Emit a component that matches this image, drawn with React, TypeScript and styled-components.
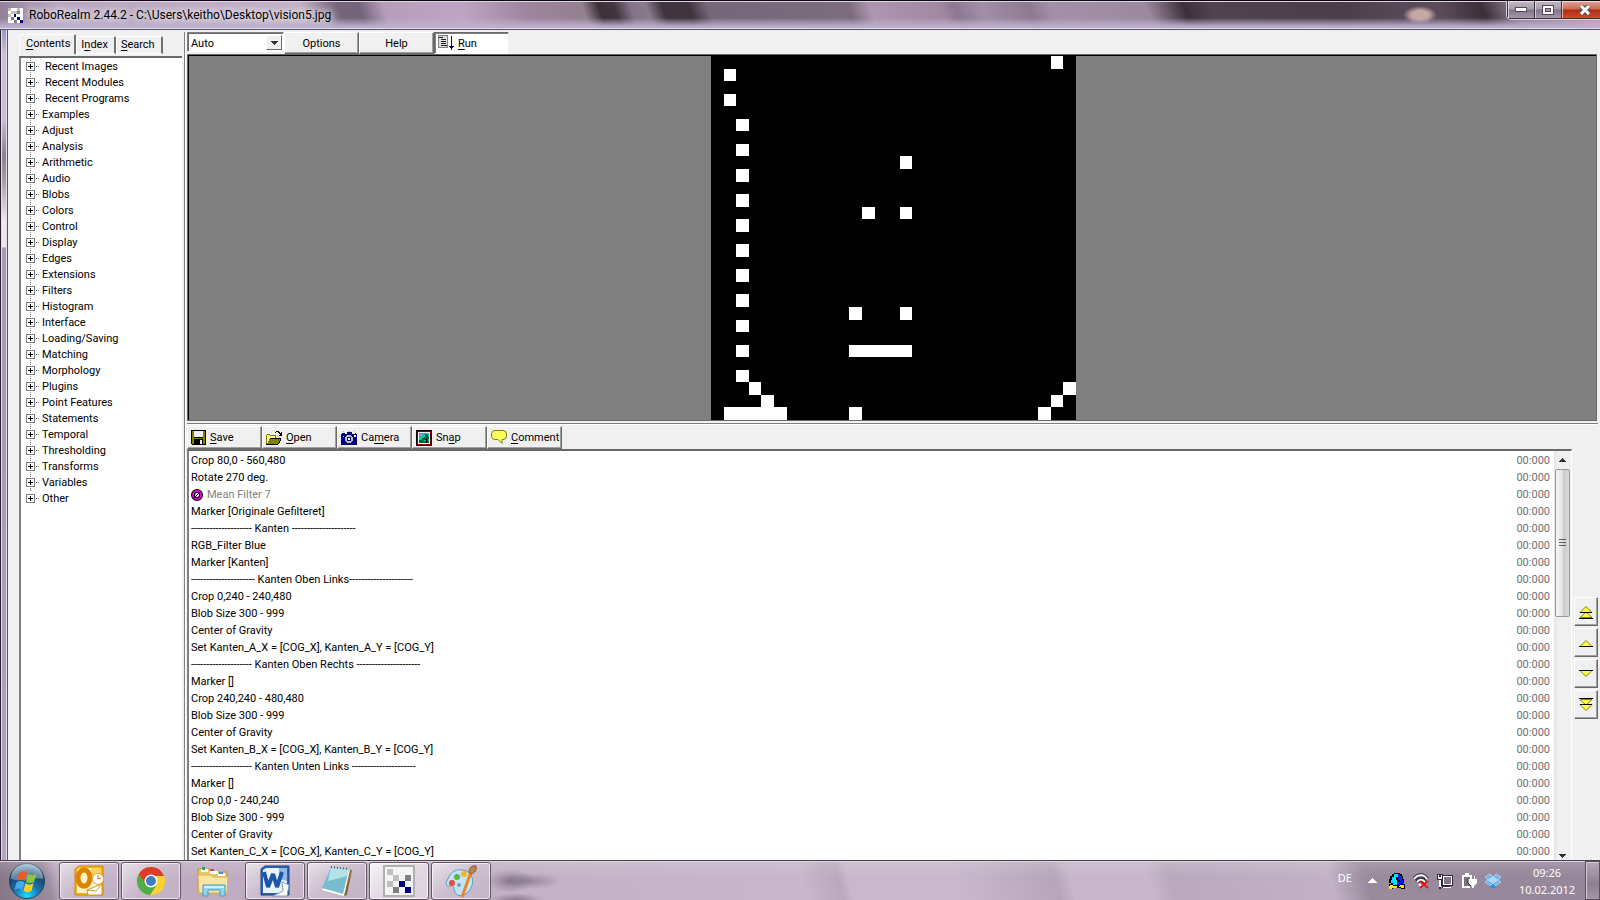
import type { ReactNode } from 'react';
import styled, { createGlobalStyle } from 'styled-components';

const GlobalStyle = createGlobalStyle`
  * {
    box-sizing: border-box;
  }
  body {
    margin: 0;
    overflow: hidden;
    font-family: Roboto, "Liberation Sans", sans-serif;
    font-size: 11px;
    color: #000000;
  }
  button, select {
    font: inherit;
    color: inherit;
    border-radius: 0;
    margin: 0;
    padding: 0;
  }
  u {
    text-underline-offset: 2px;
  }
  svg {
    display: block;
    flex: none;
  }
`;

const Desktop = styled.div`
  display: flex;
  flex-direction: column;
  height: 100vh;
`;

/* ---------- window frame ---------- */

const TitleBar = styled.header`
  display: flex;
  flex: none;
  height: 30px;
  padding-left: 8px;
  border-top: 1px solid #0c0610;
  border-bottom: 1px solid #5a5060;
  box-shadow: inset 0 1px #e2d6e6, inset 0 -1px #e4dcea;
  background:
    linear-gradient(to bottom, rgba(186, 174, 204, 0) 60%, rgba(188, 176, 206, 0.95) 90%),
    radial-gradient(ellipse 17px 9px at 1420px 14px, #c4a8a4 50%, rgba(196, 168, 164, 0)),
    linear-gradient(70deg, #8d7c94 0, #b8a6bf 60px, #c3b2c8 290px, #76647a 325px, #74647a 345px,
      #b69ebb 368px, #bfa5c3 440px, #9d869f 500px, #93808f 555px, #3d3039 570px, #43363f 585px,
      #84728a 600px, #8a7a8d 615px, #40343f 630px, #3f333c 655px, #75667a 672px, #7c6c7e 805px,
      #ac96b0 825px, #a08aa2 890px, #8d7891 905px, #a28ea6 930px, #8d7a90 975px, #a390a8 995px,
      #9c889e 1085px, #3d303c 1120px, #50434f 1145px, #4b3e49 1270px, #574858 1320px,
      #5c4c5a 1360px, #3c2f38 1400px, #8c7a90 1430px, #b8a4b8 1510px);
`;

const Caption = styled.h1`
  display: flex;
  align-items: center;
  flex: 1;
  gap: 6px;
  margin: 0;
  font: 12px/18px Roboto, sans-serif;
  text-shadow: 0 0 6px #ffffff, 0 0 10px #ffffff;
`;

const CaptionButtons = styled.div`
  display: flex;
  height: 19px;
  border: 1px solid #ded4e0;
  border-width: 0 0 1px 1px;
  border-radius: 0 0 0 5px;
  overflow: hidden;
`;

const CaptionButton = styled.button<{ $close?: boolean }>`
  display: flex;
  align-items: center;
  justify-content: center;
  width: ${p => p.$close ? 39 : 27}px;
  padding-left: ${p => p.$close ? 8 : 0}px;
  border: 1px solid #3d303d;
  border-width: 0 0 1px 1px;
  box-shadow: inset 1px 1px rgba(255, 255, 255, 0.6);
  background: ${p => p.$close
    ? 'linear-gradient(#e0a598, #cd6a56 48%, #ae2b14 52%, #cf4a2c)'
    : 'linear-gradient(#c3b8c6, #a89bad 48%, #82748a 52%, #a596ab)'};
`;

const Frame = styled.main`
  display: flex;
  flex: 1;
  min-height: 0;
  background: #f0f0f0;
`;

const FrameEdge = styled.div`
  flex: none;
  width: 8px;
  border-left: 1px solid #2a2230;
  border-right: 1px solid #5a5060;
  box-shadow: inset 1px 0 #e6dcea, inset -1px 0 #e6dcea;
  background: linear-gradient(#8f9dbe 0, #d2bdd6 24px, #cdbcd3 90px, #8d8092 125px, #a79ba9 150px,
    #efe6ee 190px, #efe6ee 217px, #a897b8 218px, #a897b8 380px, #b5a4bb);
`;

/* ---------- module tree ---------- */

const Sidebar = styled.nav`
  display: flex;
  flex-direction: column;
  flex: none;
  width: 176px;
  padding: 4px 2px 0 11px;
`;

const TabList = styled.div`
  display: flex;
  align-items: flex-end;
  height: 20px;
  margin-bottom: 2px;
`;

const Tab = styled.button<{ $active?: boolean }>`
  height: ${p => p.$active ? 20 : 18}px;
  padding: ${p => p.$active ? '0 4px 2px 6px' : '0 6px 0 4px'};
  border: 1px solid #ffffff;
  border-right: 2px solid #707070;
  border-bottom-width: ${p => p.$active ? 0 : 1}px;
  border-radius: 2px 2px 0 0;
  background: #f0f0f0;
  line-height: 16px;
`;

const Tree = styled.ul`
  flex: 1;
  min-height: 0;
  margin: 0;
  padding: 0 0 0 5px;
  border-top: 2px solid #696969;
  border-left: 2px solid #808080;
  background: #ffffff;
  list-style: none;
  overflow: hidden;
`;

const TreeItem = styled.li<{ $indent?: boolean }>`
  display: flex;
  align-items: center;
  height: 16px;
  gap: ${p => p.$indent ? 6 : 3}px;
  background: linear-gradient(#808080 50%, transparent 50%) 4px 0 / 1px 2px repeat-y;
  white-space: nowrap;
  &:last-child {
    background-size: 1px 2px;
    background-repeat: no-repeat;
  }
`;

const Expander = styled.button`
  display: flex;
  border: 0;
  background: none;
`;

/* ---------- work area ---------- */

const Work = styled.section`
  display: flex;
  flex-direction: column;
  flex: 1;
  min-width: 0;
  margin-top: 2px;
  padding-left: 2px;
  border-left: 1px solid #808080;
  box-shadow: inset 1px 0 #ffffff;
`;

const ViewBar = styled.div`
  display: flex;
  height: 22px;
`;

const ComboBox = styled.span`
  display: flex;
  position: relative;
  width: 97px;
  height: 20px;
  border: 1px solid;
  border-color: #808080 #ffffff #ffffff #808080;
  box-shadow: inset 1px 1px #696969;
  background: #ffffff;
`;

const ZoomSelect = styled.select`
  appearance: none;
  width: 100%;
  padding: 2px 0 0 3px;
  border: 0;
  background: transparent;
`;

const ComboArrow = styled.span`
  display: flex;
  align-items: center;
  justify-content: center;
  position: absolute;
  top: 2px;
  right: 1px;
  bottom: 1px;
  width: 16px;
  border: 1px solid;
  border-color: #ffffff #696969 #696969 #ffffff;
  background: #f0f0f0;
  pointer-events: none;
`;

const PushButton = styled.button<{ $sunken?: boolean; $icon?: boolean }>`
  display: flex;
  align-items: center;
  justify-content: ${p => p.$icon ? 'flex-start' : 'center'};
  gap: 4px;
  width: 75px;
  padding: ${p => p.$icon ? '0 0 0 3px' : 0};
  border: 1px solid;
  border-color: ${p => p.$sunken ? '#696969 #f0f0f0 #ffffff #696969' : '#ffffff #696969 #696969 #ffffff'};
  box-shadow: ${p => p.$sunken ? 'inset 1px 1px #808080' : 'inset -1px -1px #a0a0a0'};
  background: ${p => p.$sunken ? '#ffffff' : '#f0f0f0'};
`;

const Viewport = styled.div`
  display: flex;
  flex: none;
  justify-content: center;
  margin: 0 3px 2px 0;
  border: 1px solid #696969;
  background: #808080;
  box-shadow: inset 1px 1px #000000;
  padding: 1px 0 0 2px;
`;

const PipelineBar = styled.div`
  display: flex;
  flex: none;
  height: 26px;
  margin-right: 2px;
  padding-top: 2px;
  border-top: 1px solid #808080;
  box-shadow: inset 0 1px #ffffff;
`;

const PipelineArea = styled.div`
  display: flex;
  flex: 1;
  min-height: 0;
`;

const Pipeline = styled.div`
  display: flex;
  flex: 1;
  border-top: 2px solid #696969;
  border-left: 2px solid #808080;
  border-right: 1px solid #ffffff;
  background: #ffffff;
  overflow: hidden;
`;

const Steps = styled.ol`
  flex: 1;
  margin: 0;
  padding: 1px 4px 0 2px;
  list-style: none;
`;

const Step = styled.li<{ $off?: boolean }>`
  display: flex;
  align-items: center;
  height: 17px;
  color: ${p => p.$off ? '#808080' : '#000000'};
  white-space: pre;
  svg {
    margin-right: 4px;
  }
`;

const Elapsed = styled.time`
  margin-left: auto;
  color: #707070;
`;

const ScrollBar = styled.div`
  display: flex;
  flex-direction: column;
  width: 17px;
  background: linear-gradient(to right, #e4e4e4, #f1f1f1 4px, #efefef);
`;

const ScrollButton = styled.button`
  display: flex;
  align-items: center;
  justify-content: center;
  height: 18px;
  border: 0;
  background: transparent;
  &:last-child {
    height: 8px;
  }
`;

const Thumb = styled.div`
  display: flex;
  align-items: center;
  justify-content: center;
  height: 148px;
  margin: 0 1px;
  border: 1px solid #979797;
  border-radius: 2px;
  background: linear-gradient(to right, #f6f6f6, #e6e6e8 45%, #c9c9cf 60%, #dadade);
`;

const Track = styled.div`
  flex: 1;
`;

const MoveButtons = styled.div`
  display: flex;
  flex-direction: column;
  gap: 2px;
  width: 28px;
  padding: 148px 2px 0 2px;
`;

const MoveButton = styled.button`
  display: flex;
  align-items: center;
  justify-content: center;
  height: 29px;
  border: 1px solid;
  border-color: #ffffff #696969 #696969 #ffffff;
  box-shadow: inset -1px -1px #a0a0a0;
  background: #f0f0f0;
`;

/* ---------- taskbar ---------- */

const TaskBar = styled.footer`
  display: flex;
  flex: none;
  height: 40px;
  border-top: 1px solid #4c4350;
  box-shadow: inset 0 1px #dfd0e2;
  background:
    linear-gradient(rgba(255, 255, 255, 0.15), rgba(255, 255, 255, 0) 40%),
    radial-gradient(ellipse 24px 12px at 510px 20px, rgba(92, 76, 96, 0.5), rgba(92, 76, 96, 0)),
    radial-gradient(ellipse 32px 8px at 530px 20px, rgba(92, 76, 96, 0.4), rgba(92, 76, 96, 0)),
    radial-gradient(ellipse 28px 8px at 516px 40px, rgba(92, 76, 96, 0.6), rgba(92, 76, 96, 0)),
    linear-gradient(75deg, #857688 0, #9b8b9e 50px, #bda9bf 62px, #c4b2c7 560px, #c8b6cb 780px,
      #bfadc2 800px, #bba8be 815px, #c9b7cc 825px, #c9b7cc 930px, #b7a6bb 1025px, #c8b6cb 1040px,
      #c8b6cb 1115px, #baa9be 1135px, #c3b1c6 1290px, #998a9c 1325px, #94859a 1600px);
`;

const StartButton = styled.button`
  display: flex;
  align-items: center;
  width: 59px;
  padding-left: 8px;
  border: 0;
  background: none;
`;

const TaskButtons = styled.div`
  display: flex;
  flex: 1;
  gap: 2px;
  padding-top: 1px;
`;

const TaskButton = styled.button<{ $look: 'open' | 'active' | 'idle' }>`
  display: flex;
  align-items: center;
  justify-content: center;
  width: 60px;
  border: 1px solid ${p => p.$look === 'idle' ? 'transparent' : '#605466'};
  border-radius: 3px;
  box-shadow: ${p => p.$look === 'idle' ? 'none' : 'inset 0 0 0 1px rgba(255, 255, 255, 0.65)'};
  background: ${p => ({
    idle: 'none',
    open: 'linear-gradient(135deg, rgba(255,255,255,0.6), rgba(255,255,255,0.15) 50%, rgba(255,255,255,0.05))',
    active: 'linear-gradient(135deg, rgba(255,255,255,0.85), rgba(255,255,255,0.5) 50%, rgba(255,255,255,0.45))',
  })[p.$look]};
`;

const Tray = styled.div`
  display: flex;
  align-items: center;
  gap: 8px;
  color: #ffffff;
  font: 11px/17px "Noto Sans", sans-serif;
`;

const Language = styled.span`
  margin: 0 8px 6px 0;
`;

const TrayArrow = styled.span`
  margin-right: 4px;
`;

const Clock = styled.time`
  display: flex;
  flex-direction: column;
  align-items: center;
  width: 76px;
`;

const ShowDesktop = styled.button`
  width: 15px;
  border: 1px solid #5b4f60;
  box-shadow: inset 1px 1px #d5c9d8;
  background: linear-gradient(#b5a8b9, #8d7f92 60%, #a496a8);
`;

/* ---------- drawings ---------- */

const Crisp = ({ w, h, children }: { w: number; h: number; children: ReactNode }) =>
  <svg width={w} height={h} viewBox={`0 0 ${w} ${h}`} shapeRendering="crispEdges" aria-hidden="true">{children}</svg>;

const Smooth = ({ size, children }: { size: number; children: ReactNode }) =>
  <svg width={size} height={size} viewBox={`0 0 ${size} ${size}`} aria-hidden="true">{children}</svg>;

const AppIcon = () =>
  <Crisp w={15} h={15}>
    <path fill="#ffffff" d="M0 0h15v15H0z" />
    <path fill="#c0c0c0" d="M0 0h3v3H0zM3 3h3v3H3zM9 0h3v3H9zM0 6h3v3H0zM6 3h3v3H6z" />
    <path fill="#808080" d="M9 3h3v3H9zM3 9h3v3H3zM6 12h3v3H6z" />
    <path fill="#000080" d="M12 12h3v3h-3zM9 9h3v3H9zM6 6h2v3H6z" />
  </Crisp>;

const PlusBox = () =>
  <Crisp w={13} h={9}>
    <path fill="#ffffff" stroke="#808080" d="M.5 .5h8v8h-8z" />
    <path fill="#000000" d="M2 4h5v1H2zM4 2h1v5H4z" />
    <path fill="#808080" d="M10 4h1v1h-1zM12 4h1v1h-1z" />
  </Crisp>;

const RunIcon = () =>
  <Crisp w={16} h={16}>
    <path fill="#dcdcdc" stroke="#808080" d="M.5 .5h9v12h-9z" />
    <path fill="#202020" d="M1 2h4v1H1zM3 4h5v1H3zM3 6h5v1H3zM3 8h5v1H3zM3 10h6v1H3z" />
    <path fill="#000080" d="M13 1h1v10h2v1h-1v1h-1v2h-1v-2h-1v-1h-1v-1h2z" />
  </Crisp>;

const SaveIcon = () =>
  <Crisp w={15} h={15}>
    <path fill="#000000" d="M0 0h15v15H1V14H0z" />
    <path fill="#808000" d="M1 1h2v7h9V1h2v13h-2V9H3v5H1z" />
    <path fill="#f0f0f0" d="M3 1h9v6H3zM9 10h2v4H9z" />
  </Crisp>;

const OpenIcon = () =>
  <Crisp w={16} h={14}>
    <path fill="#000000" d="M9 1h1V0h3v1h1v1h1V1h1v4h-3V4h1V3h-1v-1h-1V1h-2v1H9z" />
    <path fill="#808000" d="M1 3h3v1h6v3h5v1h-1v2h-1v2h-1v1H0V4h1z" />
    <path fill="#ffff80" d="M1 4h3v1h5v2H4v1H3v2H2v2H1z" />
    <path fill="#000000" d="M4 7h11v1H4zM0 13h12v1H0zM12 12h1v1h-1zM13 10h1v2h-1zM14 8h1v2h-1z" />
  </Crisp>;

const CameraIcon = () =>
  <Crisp w={16} h={14}>
    <path fill="#000080" d="M0 3h1V2h3v1h2V1h5v2h3V2h1v1h1v11H0z" />
    <path fill="#c0c0c0" d="M7 0h3v1H7zM2 0h1v1H2zM13 0h1v1h-1zM2 5h1v1H2zM6 4h4v1h1v1h1v4h-1v1h-1v1H6v-1H5v-1H4V6h1V5h1z" />
    <path fill="#000080" d="M6 6h4v4H6z" />
    <path fill="#ffffff" d="M7 7h2v2H7zM13 4h2v2h-2z" />
  </Crisp>;

const SnapIcon = () =>
  <Crisp w={16} h={16}>
    <path fill="#000000" d="M0 0h16v16H0z" />
    <path fill="#800000" d="M1 1h14v14H1z" />
    <path fill="#ffffff" d="M2 2h12v12H2z" />
    <path fill="#00c0c0" d="M3 3h10v8H3z" />
    <path fill="#006030" d="M3 10h3V8h2v3h5v2H3zM9 4h2v1h1v2h1v2h-1v2h-1v2h-1v-3H8V7h1z" />
    <path fill="#ff8080" d="M4 4h2v2H4z" />
    <path fill="#000000" d="M10 9h1v4h-1z" />
  </Crisp>;

const CommentIcon = () =>
  <Smooth size={16}>
    <path fill="#ffff60" stroke="#808000" d="M4 .5h8a3.500 3.500 0 0 1 3.500 3.500v2a3.500 3.500 0 0 1-3.500 3.500h-1v4l-4-4H4A3.500 3.500 0 0 1 .5 6V4A3.500 3.500 0 0 1 4 .5z" />
  </Smooth>;

const DisabledIcon = () =>
  <Smooth size={12}>
    <circle cx="6" cy="6" r="4" fill="#ffffff" stroke="#000000" strokeWidth="4" />
    <circle cx="6" cy="6" r="4" fill="none" stroke="#e000e0" strokeWidth="2" />
    <path stroke="#000000" strokeWidth="1" d="M3 9l6-6" />
  </Smooth>;

const MoveIcon = ({ down, double }: { down?: boolean; double?: boolean }) =>
  <svg width="14" height="14" viewBox="0 0 14 14" aria-hidden="true">
    <g fill="#ffff40" stroke="#808000" transform={down ? 'matrix(1 0 0 -1 0 14)' : undefined}>
      {double && <path d="M1 12.500L7 7l6 5.500z" />}
      <path d={double ? 'M1 7.500L7 1.500l6 6z' : 'M1 10.500L7 4.500l6 6z'} />
      {double && <path stroke="#000000" d="M0 13.500h14" />}
      <path stroke="#000000" d={double ? 'M1 7.500h12' : 'M0 10.500h14'} />
    </g>
  </svg>;

const Arrow = ({ up }: { up?: boolean }) =>
  <Crisp w={7} h={4}>
    <path fill="#303030" d={up ? 'M3 0h1v1h1v1h1v1h1v1H0V3h1V2h1V1h1z' : 'M0 0h7v1H6v1H5v1H4v1H3V3H2V2H1V1H0z'} />
  </Crisp>;

// column, row, run length on the 29 x 29 image
const blobs: [number, number, number][] = [
  [27, 0, 1], [1, 1, 1], [1, 3, 1],
  ...[5, 7, 9, 11, 13, 15, 17, 19, 21, 23, 25].map((row): [number, number, number] => [2, row, 1]),
  [15, 8, 1], [12, 12, 1], [15, 12, 1], [11, 20, 1], [15, 20, 1], [11, 23, 5],
  [3, 26, 1], [28, 26, 1], [4, 27, 1], [27, 27, 1], [1, 28, 5], [11, 28, 1], [26, 28, 1],
];

const CameraImage = () =>
  <svg width="365" height="364" viewBox="0 0 29 29" preserveAspectRatio="none" shapeRendering="crispEdges" role="img" aria-label="Processed image">
    <rect width="29" height="29" fill="#000000" />
    {blobs.map(([x, y, n]) => <rect key={`${x}-${y}`} x={x} y={y} width={n} height="1" fill="#ffffff" />)}
  </svg>;

const WindowsOrb = () =>
  <Smooth size={38}>
    <defs>
      <radialGradient id="orb" cx="50%" cy="95%" r="90%">
        <stop offset="0" stopColor="#20e0ff" />
        <stop offset="0.4" stopColor="#1678b4" />
        <stop offset="0.75" stopColor="#17446e" />
        <stop offset="1" stopColor="#7fa6c0" />
      </radialGradient>
    </defs>
    <circle cx="19" cy="19" r="17.500" fill="url(#orb)" stroke="#23435c" />
    <path fill="#ffffff" opacity="0.35" d="M3 17a16 16 0 0 1 32 0c-8-3-20 3-32 0z" />
    <path fill="#ee5a24" d="M11 11c3-2 5-2 8 0l-2 8c-3-2-5-2-8 0z" />
    <path fill="#8cc63f" d="M20 11.500c3 2 5 2 8.500 0L26 20c-3 1.500-5 1.500-8 0z" />
    <path fill="#4aa8e8" d="M8.500 20.500c3-2 5-2 8 0l-2 7.500c-3-2-5-2-8 0z" />
    <path fill="#ffcb1f" d="M17.500 21c3 2 5 2 8 0l-2 8c-3 1.500-5 1.500-8 0z" />
  </Smooth>;

const OutlookIcon = () =>
  <Smooth size={32}>
    <path fill="#f7b21b" stroke="#d18406" d="M2 4l4-3h24v29H2z" />
    <path fill="#fff3c8" d="M4 5l3-2h21v25H4z" />
    <path fill="#fbd35c" d="M18 3h10v13l-10-4z" />
    <ellipse cx="11" cy="13" rx="6" ry="8" fill="none" stroke="#dc8400" strokeWidth="5" />
    <path fill="#ffffff" stroke="#d7982e" d="M14 25l15-6v11H15z" />
    <path fill="none" stroke="#d7982e" d="M14 25l9 1 6-7" />
    <circle cx="25" cy="14" r="5.500" fill="#ffffff" stroke="#e0a040" />
    <path stroke="#d06a20" fill="none" d="M25 10v4l3-1" />
  </Smooth>;

const ChromeIcon = () =>
  <Smooth size={32}>
    <circle cx="16" cy="16" r="14" fill="#fbd130" />
    <path fill="#dd3b2c" d="M3.500 9.500A14 14 0 0 1 29 11H16l-6 8z" />
    <path fill="#4fae45" d="M3.500 9.500A14 14 0 0 0 15 30l6-9-9-1z" />
    <circle cx="16" cy="16" r="6.500" fill="#ffffff" />
    <circle cx="16" cy="16" r="5" fill="#3c7fc4" />
  </Smooth>;

const ExplorerIcon = () =>
  <Smooth size={34}>
    <path fill="#e8c765" stroke="#c09a3c" d="M2 5h12l2 3h15v21H2z" />
    <path fill="#ffffff" d="M5 5h7v3H5zM14 7h8v3h-8zM22 9h7v3h-7z" />
    <path fill="#2da848" d="M6 3h3v3H6z" />
    <path fill="#d04830" d="M14 5h4v2h-4z" />
    <path fill="#3b8fd6" d="M23 8h4v2h-4z" />
    <path fill="#f8e6a0" stroke="#d6b45a" d="M2 11h13l2 2h15l-1 16H3z" />
    <path fill="#8fd3ee" stroke="#4b9cc4" d="M7 21h22v11h-5v-6H12v6H7z" />
    <path fill="#d8f3ff" d="M8 22h20v2H8z" />
  </Smooth>;

const WordIcon = () =>
  <Smooth size={32}>
    <path fill="#2b62b4" stroke="#1c4688" d="M2 4l4-3h24v29H2z" />
    <path fill="#e8f1fc" d="M4 5l3-2h21v25H4z" />
    <path fill="#8fb8e8" d="M20 3h8v13l-8-2z" />
    <path fill="none" stroke="#1d55a8" strokeWidth="4" strokeLinejoin="bevel" d="M5 7l4 15 5-13 4 13 5-15" />
    <path fill="#ffffff" stroke="#7d9ec8" d="M23 17l7 3-2 11H14l10-5z" />
  </Smooth>;

const NotepadIcon = () =>
  <Smooth size={34}>
    <path fill="#8b6a3c" d="M13 4l19 2-5 25-3 1z" />
    <path fill="#ffffff" d="M11 4l19 2-6 26-22-6z" />
    <path fill="#79bccd" d="M11 3l18 2-6 25-21-6z" />
    <path fill="#b5e2ea" d="M11 3l18 2-2 7-19 5z" />
    <path fill="none" stroke="#4a5a60" strokeWidth="2" strokeDasharray="1 2" d="M11 3l18 2" />
  </Smooth>;

const RoboIcon = () =>
  <Crisp w={32} h={32}>
    <path fill="#f4f4f4" stroke="#b0b0b0" strokeWidth="2" d="M1 1h30v30H1z" />
    <path fill="#c0c0c0" d="M4 4h6v6H4zM10 10h6v6h-6zM4 16h6v6H4z" />
    <path fill="#808080" d="M22 10h6v6h-6zM10 22h6v6h-6z" />
    <path fill="#000080" d="M16 16h6v6h-6zM22 22h6v6h-6z" />
  </Crisp>;

const PaintIcon = () =>
  <Smooth size={34}>
    <path fill="#c3e4f5" stroke="#5f9cc4" d="M5 13C8 5 18 4 24 8s6 13 1 19-12 6-14 1 0-7-5-6-5-3-1-9z" />
    <circle cx="8" cy="19" r="3" fill="#e0503c" />
    <circle cx="13" cy="13" r="3" fill="#58b848" />
    <circle cx="20" cy="10" r="3" fill="#f5b529" />
    <circle cx="15" cy="21" r="2" fill="#7f9cc4" />
    <path stroke="#e8862a" strokeWidth="3" d="M27 8l-9 25" />
    <path fill="#b98350" stroke="#8a5c30" d="M25 8c0-4 3-7 7-6 1 4-1 7-5 8z" />
  </Smooth>;

const MessengerIcon = () =>
  <Crisp w={16} h={16}>
    <path fill="#000000" d="M5 0h6v1h2v2h1v3h1v4h-1v1h2v5h-4v-1H4v1H0v-5h2v-1H0V6h1V3h2V1h2z" />
    <path fill="#00e0ff" d="M5 1h4v3H7v3h1v5H4v-2H2V7h1V4h2z" />
    <path fill="#0020e0" d="M9 1h2v2h2v4h1v3h-2v2H9V9h2V7H9z" />
    <path fill="#ffe800" d="M1 12h3v1h4v2H3v1H0v-3h1zM11 12h4v3h-3v-1h-2z" />
  </Crisp>;

const WifiIcon = () =>
  <Smooth size={16}>
    <path fill="none" stroke="#302838" strokeWidth="4" d="M1 6c4-5 10-5 13 0M4 9c2-3 6-3 8 0" />
    <path fill="none" stroke="#ffffff" strokeWidth="2" d="M1 6c4-5 10-5 13 0M4 9c2-3 6-3 8 0M6 11l2 2" />
    <path stroke="#e81c10" strokeWidth="2" d="M7 8l8 7M15 8l-8 7" />
  </Smooth>;

const NetworkIcon = () =>
  <Crisp w={16} h={16}>
    <path fill="#302838" d="M4 2h12v11h-3v2H5v-2H4zM0 1h6v6H4v9H2V7H0z" />
    <path fill="#ffffff" d="M6 3h9v9H6zM6 14h8v1H6zM1 2h1v2h2V2h1v4H1zM2 7h2v7H2z" />
    <path fill="#81748a" d="M7 4h7v7H7z" />
  </Crisp>;

const PowerIcon = () =>
  <Smooth size={16}>
    <path fill="#7c6e80" stroke="#ffffff" strokeWidth="2" d="M2 3h8v11H2z" />
    <path fill="#ffffff" d="M4 0h4v2H4zM7 6h9v4l-3 3v2h-3v-2l-3-3zM9 3h1v3H9zM13 3h1v3h-1z" />
    <path fill="none" stroke="#302838" d="M7 6v4l3 3v2" />
  </Smooth>;

const DropboxIcon = () =>
  <Smooth size={16}>
    <path fill="#a9d8f8" d="M3 7l5-3 5 3-5 3z" />
    <path fill="#3f8fd0" d="M3 11l2 1 3-3 3 3 2-1v2l-5 3-5-3z" />
    <path fill="#6db8ee" stroke="#e4f4ff" strokeWidth="0.5" d="M0 4l5-3 3 3-5 3zM16 4l-5-3-3 3 5 3zM0 9l3-2 5 3-3 3zM16 9l-3-2-5 3 3 3z" />
  </Smooth>;

/* ---------- content ---------- */

const recent = ['Recent Images', 'Recent Modules', 'Recent Programs'];
const modules = [
  'Examples', 'Adjust', 'Analysis', 'Arithmetic', 'Audio', 'Blobs', 'Colors', 'Control', 'Display',
  'Edges', 'Extensions', 'Filters', 'Histogram', 'Interface', 'Loading/Saving', 'Matching',
  'Morphology', 'Plugins', 'Point Features', 'Statements', 'Temporal', 'Thresholding', 'Transforms',
  'Variables', 'Other',
];

const steps = [
  'Crop 80,0 - 560,480',
  'Rotate 270 deg.',
  'Mean Filter 7',
  'Marker [Originale Gefilteret]',
  '-------------------- Kanten ---------------------',
  'RGB_Filter Blue',
  'Marker [Kanten]',
  '--------------------- Kanten Oben Links---------------------',
  'Crop 0,240 - 240,480',
  'Blob Size 300 - 999',
  'Center of Gravity',
  'Set Kanten_A_X = [COG_X], Kanten_A_Y = [COG_Y]',
  '-------------------- Kanten Oben Rechts ---------------------',
  'Marker []',
  'Crop 240,240 - 480,480',
  'Blob Size 300 - 999',
  'Center of Gravity',
  'Set Kanten_B_X = [COG_X], Kanten_B_Y = [COG_Y]',
  '-------------------- Kanten Unten Links ---------------------',
  'Marker []',
  'Crop 0,0 - 240,240',
  'Blob Size 300 - 999',
  'Center of Gravity',
  'Set Kanten_C_X = [COG_X], Kanten_C_Y = [COG_Y]',
];

const tasks: { name: string; look: 'open' | 'active' | 'idle'; icon: ReactNode }[] = [
  { name: 'Outlook', look: 'open', icon: <OutlookIcon /> },
  { name: 'Chrome', look: 'open', icon: <ChromeIcon /> },
  { name: 'Explorer', look: 'idle', icon: <ExplorerIcon /> },
  { name: 'Word', look: 'open', icon: <WordIcon /> },
  { name: 'Notepad', look: 'open', icon: <NotepadIcon /> },
  { name: 'RoboRealm', look: 'active', icon: <RoboIcon /> },
  { name: 'Paint', look: 'open', icon: <PaintIcon /> },
];

const App = () =>
  <Desktop>
    <GlobalStyle />
    <TitleBar>
      <Caption><AppIcon />RoboRealm 2.44.2 - C:\Users\keitho\Desktop\vision5.jpg</Caption>
      <CaptionButtons>
        <CaptionButton aria-label="Minimize">
          <Crisp w={12} h={5}><path fill="#ffffff" stroke="#544a5c" d="M.5 .5h11v4H.5z" /></Crisp>
        </CaptionButton>
        <CaptionButton aria-label="Maximize">
          <Crisp w={12} h={10}>
            <path fill="#ffffff" stroke="#544a5c" d="M.5 .5h11v9H.5z" />
            <path fill="#a89bad" stroke="#544a5c" d="M3.500 3.500h5v3h-5z" />
          </Crisp>
        </CaptionButton>
        <CaptionButton aria-label="Close" $close>
          <svg width="12" height="10" viewBox="0 0 12 10" aria-hidden="true">
            <path stroke="#544a5c" strokeWidth="5" d="M2 1l8 8M10 1L2 9" />
            <path stroke="#ffffff" strokeWidth="3" d="M2 1l8 8M10 1L2 9" />
          </svg>
        </CaptionButton>
      </CaptionButtons>
    </TitleBar>

    <Frame>
      <FrameEdge />
      <Sidebar>
        <TabList role="tablist">
          <Tab role="tab" aria-selected $active><u>C</u>ontents</Tab>
          <Tab role="tab">I<u>n</u>dex</Tab>
          <Tab role="tab"><u>S</u>earch</Tab>
        </TabList>
        <Tree>
          {recent.map(name =>
            <TreeItem key={name} $indent><Expander aria-label={name}><PlusBox /></Expander>{name}</TreeItem>)}
          {modules.map(name =>
            <TreeItem key={name}><Expander aria-label={name}><PlusBox /></Expander>{name}</TreeItem>)}
        </Tree>
      </Sidebar>

      <Work>
        <ViewBar>
          <ComboBox>
            <ZoomSelect aria-label="Zoom"><option>Auto</option></ZoomSelect>
            <ComboArrow><Arrow /></ComboArrow>
          </ComboBox>
          <PushButton>Options</PushButton>
          <PushButton>Help</PushButton>
          <PushButton $sunken $icon><RunIcon /><span><u>R</u>un</span></PushButton>
        </ViewBar>
        <Viewport><CameraImage /></Viewport>
        <PipelineBar>
          <PushButton $icon><SaveIcon /><span><u>S</u>ave</span></PushButton>
          <PushButton $icon><OpenIcon /><span><u>O</u>pen</span></PushButton>
          <PushButton $icon><CameraIcon /><span>Ca<u>m</u>era</span></PushButton>
          <PushButton $icon><SnapIcon /><span>Sn<u>a</u>p</span></PushButton>
          <PushButton $icon><CommentIcon /><span><u>C</u>omment</span></PushButton>
        </PipelineBar>
        <PipelineArea>
          <Pipeline>
            <Steps>
              {steps.map((text, i) =>
                <Step key={i} $off={text === 'Mean Filter 7'}>
                  {text === 'Mean Filter 7' && <DisabledIcon />}
                  {text}
                  <Elapsed>00:000</Elapsed>
                </Step>)}
            </Steps>
            <ScrollBar>
              <ScrollButton aria-label="Scroll up"><Arrow up /></ScrollButton>
              <Thumb>
                <Crisp w={7} h={8}><path fill="#606060" d="M0 0h7v1H0zM0 3h7v1H0zM0 6h7v1H0z" /></Crisp>
              </Thumb>
              <Track />
              <ScrollButton aria-label="Scroll down"><Arrow /></ScrollButton>
            </ScrollBar>
          </Pipeline>
          <MoveButtons>
            <MoveButton aria-label="Move to top"><MoveIcon double /></MoveButton>
            <MoveButton aria-label="Move up"><MoveIcon /></MoveButton>
            <MoveButton aria-label="Move down"><MoveIcon down /></MoveButton>
            <MoveButton aria-label="Move to bottom"><MoveIcon down double /></MoveButton>
          </MoveButtons>
        </PipelineArea>
      </Work>
    </Frame>

    <TaskBar>
      <StartButton aria-label="Start"><WindowsOrb /></StartButton>
      <TaskButtons>
        {tasks.map(task =>
          <TaskButton key={task.name} $look={task.look} aria-label={task.name}>{task.icon}</TaskButton>)}
      </TaskButtons>
      <Tray>
        <Language>DE</Language>
        <TrayArrow>
          <Crisp w={9} h={5}><path fill="#ffffff" d="M4 0h1v1h1v1h1v1h1v1h1v1H0V4h1V3h1V2h1V1h1z" /></Crisp>
        </TrayArrow>
        <MessengerIcon />
        <WifiIcon />
        <NetworkIcon />
        <PowerIcon />
        <DropboxIcon />
        <Clock><span>09:26</span><span>10.02.2012</span></Clock>
      </Tray>
      <ShowDesktop aria-label="Show desktop" />
    </TaskBar>
  </Desktop>;

export default App;
